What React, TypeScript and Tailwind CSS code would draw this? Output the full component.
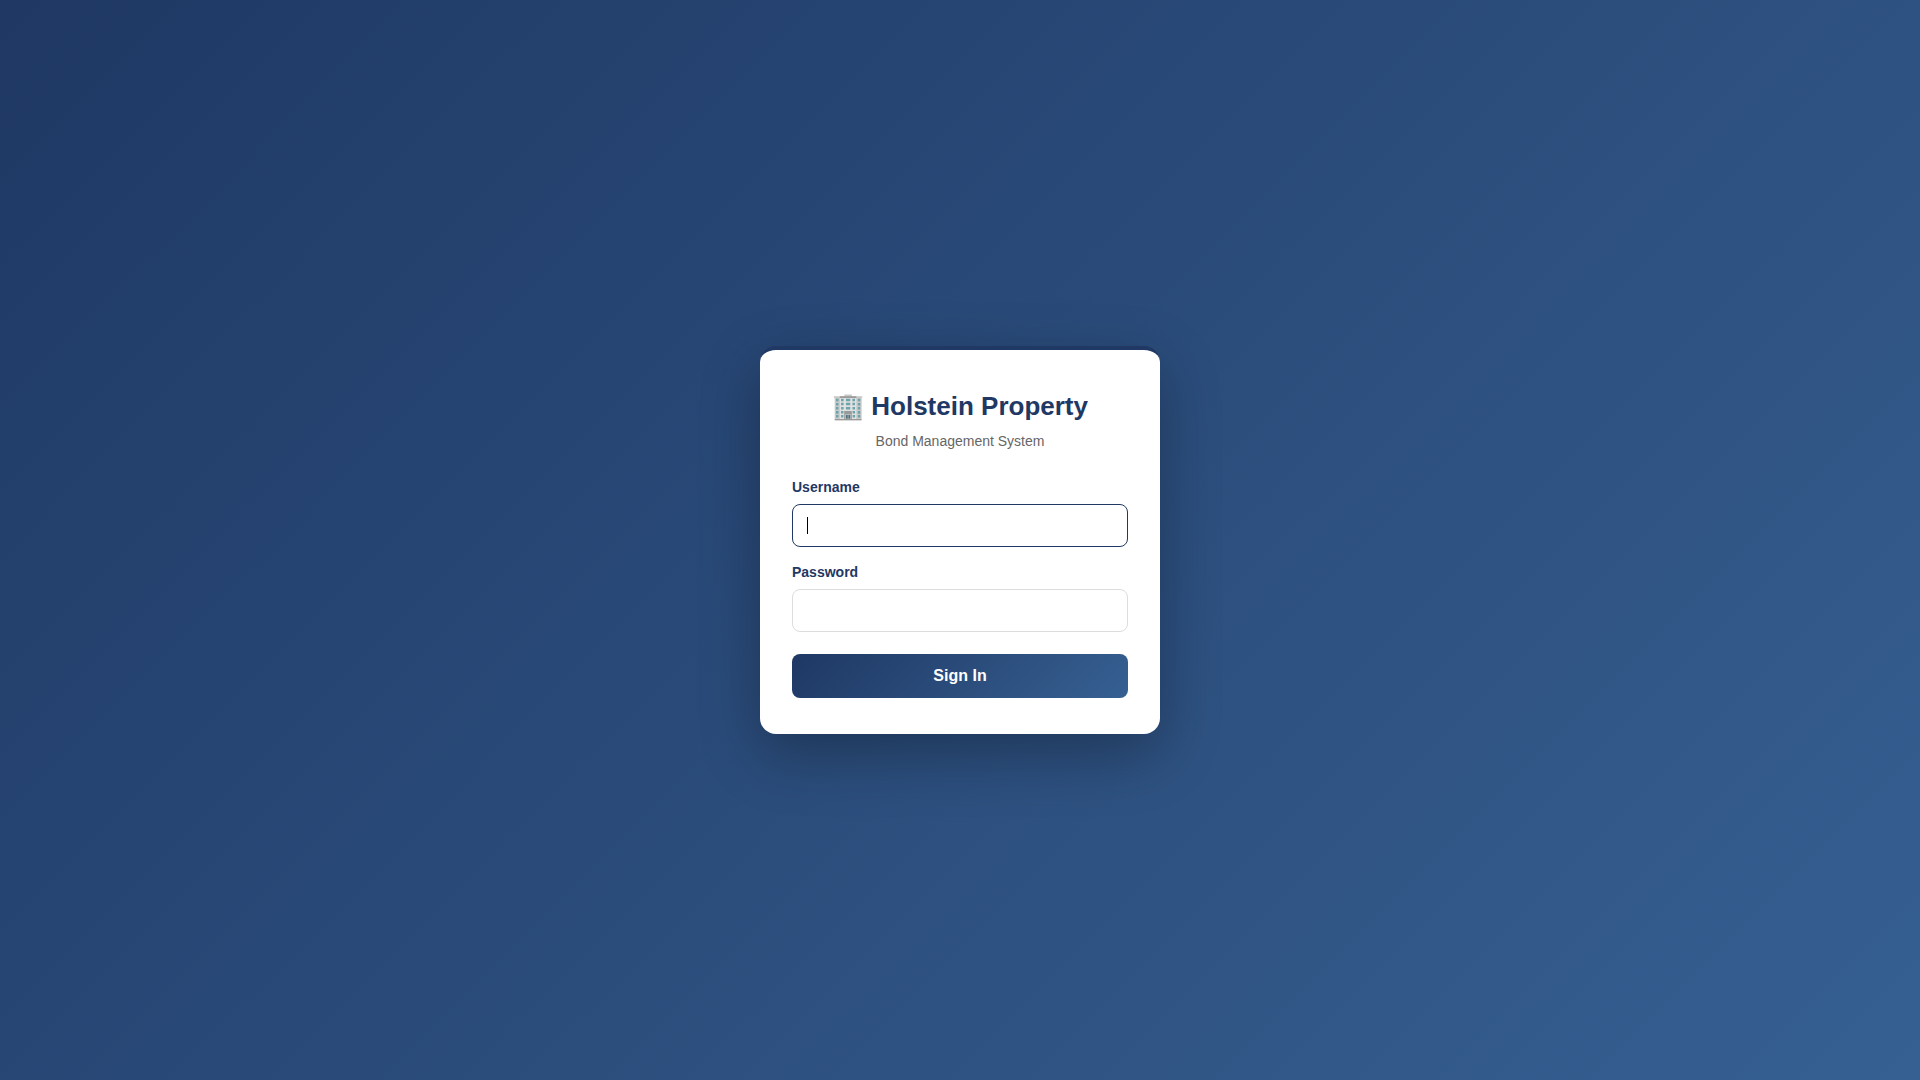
import { useState } from 'react';

type FieldProps = {
  id: string;
  label: string;
  type: string;
  autoFocus?: boolean;
};

function Field({ id, label, type, autoFocus = false }: FieldProps) {
  const [focused, setFocused] = useState(autoFocus);
  const [value, setValue] = useState('');
  const steadyCaret = focused && value === '';

  return (
    <div>
      <label htmlFor={id} className="mb-[7px] block text-[14px] leading-5 font-bold text-[#1f3864]">
        {label}
      </label>
      <div className="relative">
        <input
          id={id}
          name={id}
          type={type}
          autoFocus={autoFocus}
          value={value}
          onChange={(e) => setValue(e.target.value)}
          onFocus={() => setFocused(true)}
          onBlur={() => setFocused(false)}
          className={
            'block h-[43px] w-full rounded-lg border border-[#dddddd] bg-white px-3.5 text-[15px] text-black outline-none focus:border-[#1f3864] ' +
            (steadyCaret ? 'caret-transparent' : 'caret-black')
          }
        />
        {steadyCaret && (
          <span
            aria-hidden="true"
            className="pointer-events-none absolute inset-y-0 left-[15px] my-auto h-[17px] w-px bg-black"
          />
        )}
      </div>
    </div>
  );
}

export default function App() {
  return (
    <main className="flex min-h-screen items-center justify-center bg-[linear-gradient(135deg,#1f3864,#366092)] font-['Liberation_Sans',sans-serif]">
      <div className="w-full max-w-[400px] rounded-2xl border-t-4 border-[#1f3864] bg-white px-8 py-9 shadow-[0_20px_60px_rgba(0,0,0,0.3)]">
        <h1 className="text-center text-[26px] leading-10 font-bold text-[#1f3864]">🏢 Holstein Property</h1>
        <p className="mt-[5px] text-center text-[14px] leading-5 text-[#666666]">Bond Management System</p>
        <form className="mt-[26px] flex flex-col gap-[15px]" onSubmit={(e) => e.preventDefault()}>
          <Field id="username" label="Username" type="text" autoFocus />
          <Field id="password" label="Password" type="password" />
          <button
            type="submit"
            className="mt-[7px] h-11 w-full rounded-lg bg-[linear-gradient(135deg,#1f3864,#366092)] text-base font-bold text-white"
          >
            Sign In
          </button>
        </form>
      </div>
    </main>
  );
}
